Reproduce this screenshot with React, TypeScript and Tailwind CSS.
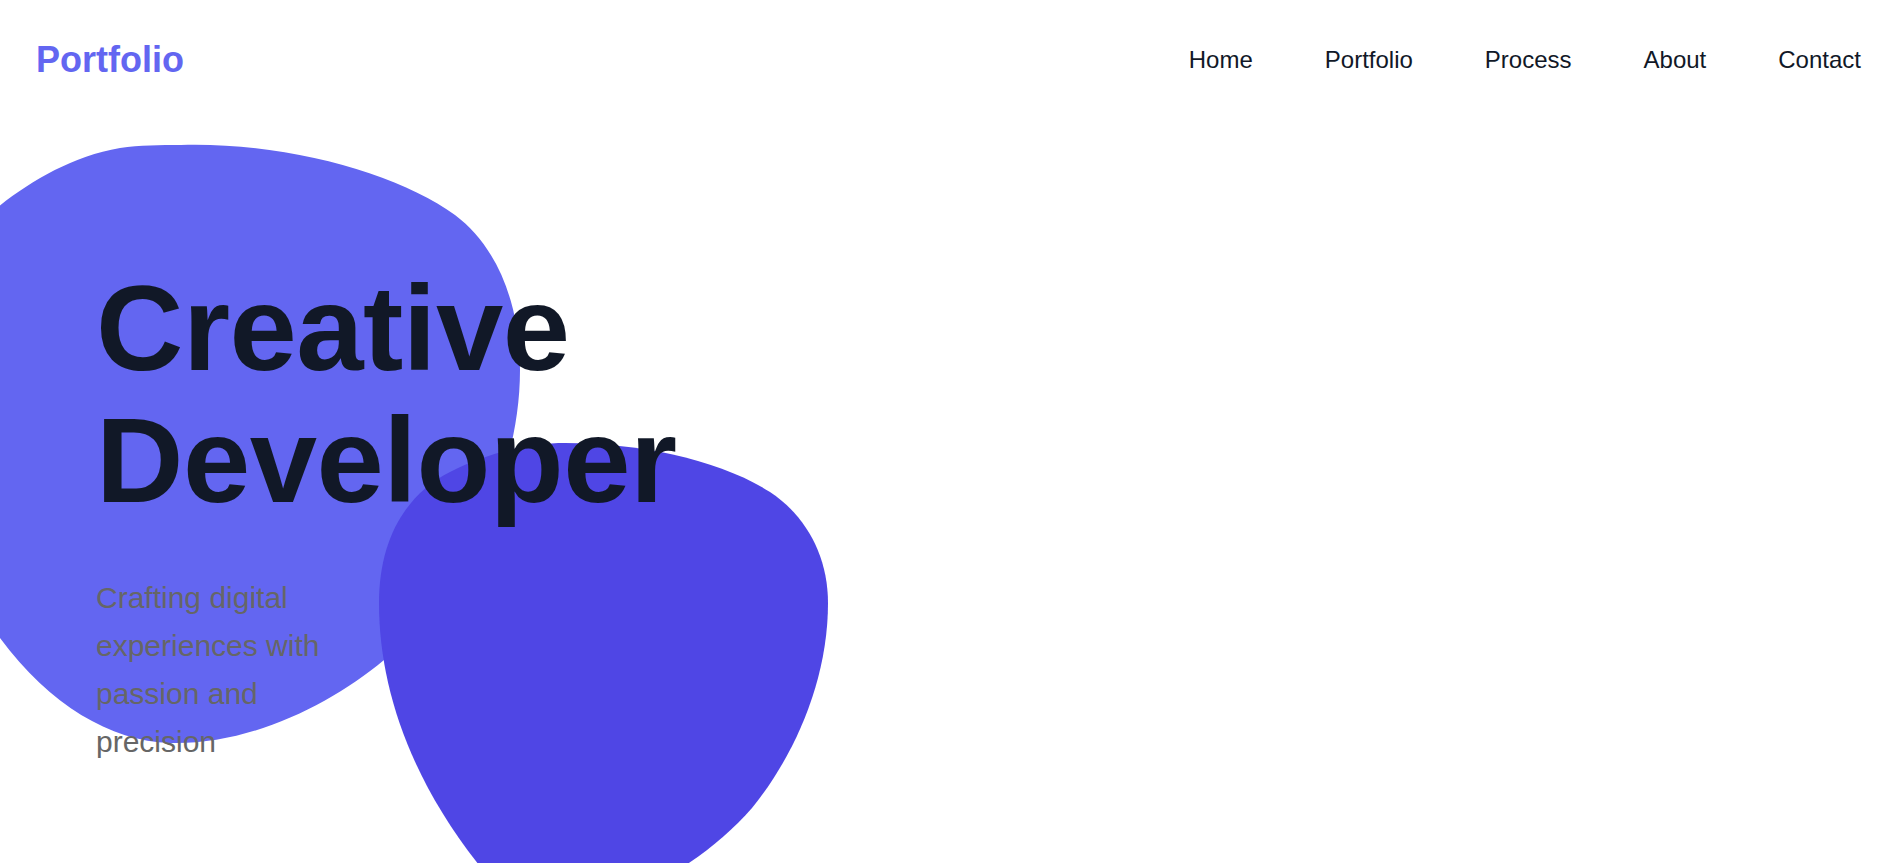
export default function App() {
  const links = ['Home', 'Portfolio', 'Process', 'About', 'Contact']

  return (
    <div className="relative h-[863px] w-full overflow-hidden bg-white font-['Liberation_Sans',Arial,sans-serif]">
      {/* background blobs */}
      <svg
        className="absolute left-0 top-0 z-0"
        width="900"
        height="863"
        viewBox="0 0 900 863"
        aria-hidden="true"
      >
        <path
          fill="#6366f1"
          d="M 181 145 C 290 142, 400 175, 455 215 C 495 245, 520 300, 520 370 C 520 470, 470 580, 384 660 C 330 705, 250 745, 170 743 C 110 741, 50 705, 0 638 C -30 600, -60 550, -60 480 L -60 260 C -20 220, 40 162, 120 148 C 140 145, 160 145, 181 145 Z"
        />
        <path
          fill="#4f46e5"
          d="M 379 603 C 379 540, 405 495, 450 472 C 490 452, 530 443, 565 443 C 640 443, 720 460, 770 492 C 805 515, 828 555, 828 603 C 828 680, 795 755, 752 808 C 715 850, 665 885, 590 910 L 500 890 C 420 800, 379 700, 379 603 Z"
        />
      </svg>

      <header className="relative z-10 flex items-center justify-between pl-[36px] pr-[30px] py-[40px]">
        <div className="text-[36px] leading-[40px] font-bold text-[#6366f1]">Portfolio</div>
        <nav className="flex items-center gap-[72px]">
          {links.map((l) => (
            <a key={l} href="#" className="text-[24px] leading-[28px] text-[#111827]">
              {l}
            </a>
          ))}
        </nav>
      </header>

      <section className="relative z-10 pl-[96px] pt-[142px]">
        <h1 className="text-[121px] leading-[132px] font-bold tracking-[-0.5px] text-[#111827]">
          Creative
          <br />
          Developer
        </h1>
        <p className="mt-[48px] w-[240px] text-[30px] leading-[48px] text-[#666]">
          Crafting digital experiences with passion and precision
        </p>
      </section>
    </div>
  )
}
